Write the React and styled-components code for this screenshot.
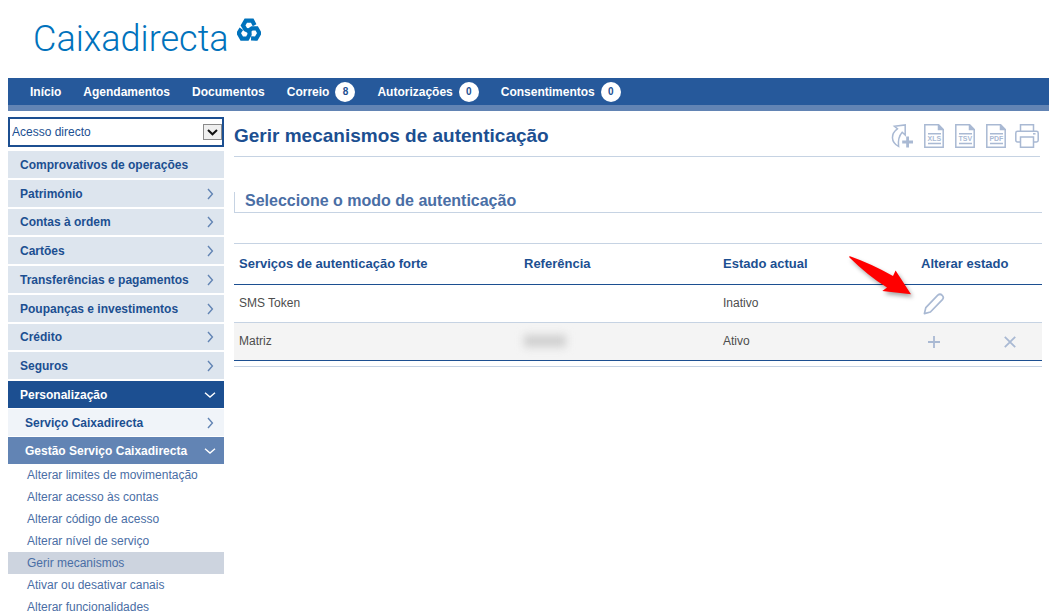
import { useState } from 'react';
import styled, { createGlobalStyle } from 'styled-components';

const topLinks = [
  { label: 'Início' },
  { label: 'Agendamentos' },
  { label: 'Documentos' },
  { label: 'Correio', count: 8 },
  { label: 'Autorizações', count: 0 },
  { label: 'Consentimentos', count: 0 },
];

const menu = [
  'Comprovativos de operações',
  'Património',
  'Contas à ordem',
  'Cartões',
  'Transferências e pagamentos',
  'Poupanças e investimentos',
  'Crédito',
  'Seguros',
];

const submenu = [
  'Alterar limites de movimentação',
  'Alterar acesso às contas',
  'Alterar código de acesso',
  'Alterar nível de serviço',
  'Gerir mecanismos',
  'Ativar ou desativar canais',
  'Alterar funcionalidades',
];

function Chevron({ down }) {
  return (
    <svg width="12" height="12" viewBox="0 0 12 12" fill="none" stroke="currentColor" strokeWidth="1.4" aria-hidden="true">
      <path d={down ? 'M1 3.8L6 8L11 3.8' : 'M4 1L8.4 6L4 11'} />
    </svg>
  );
}

// three open links turning round the centre
function Knot() {
  const link = 'M17.6 7.2L15.2 2.6H8.8L6 7.4L8.4 11.4L12.8 13.6';
  return (
    <svg width="24" height="23" viewBox="0 0 24 23" fill="none" stroke="#0072bc" strokeWidth="4.2" aria-hidden="true">
      <path d={link} />
      <path d={link} transform="rotate(120 12 12.8)" />
      <path d={link} transform="rotate(240 12 12.8)" />
    </svg>
  );
}

function ShareIcon() {
  return (
    <svg width="22" height="24" viewBox="0 0 22 24" fill="none" stroke="#a9b9d3" strokeWidth="1.5" aria-hidden="true">
      <path d="M3.4 2.2L14.2 0.9V11L11.2 8.2C8.2 11.5 6.8 16 7.6 22.4C-0.6 18 -0.2 9.6 6.4 4.8Z" />
      <path d="M16.6 12.5V23.5M11.2 18H22" strokeWidth="2.8" />
    </svg>
  );
}

function FileIcon({ type }) {
  return (
    <svg width="22" height="24" viewBox="-2 0 22 24" fill="none" stroke="#a9b9d3" strokeWidth="1.5" aria-hidden="true">
      <path d="M0.8 0.8H14.5L19.2 5.5V23.2H0.8Z" />
      <path d="M14.5 1V5.5H19Z" fill="#a9b9d3" />
      <path d="M4 9.8H17M4 19.4H17" />
      <text x="10.4" y="17.3" textAnchor="middle" fontSize="7" fontWeight="bold" fill="#a9b9d3" stroke="none">{type}</text>
    </svg>
  );
}

function PrintIcon() {
  return (
    <svg width="24" height="24" viewBox="0 0 24 24" fill="none" stroke="#a9b9d3" strokeWidth="1.5" aria-hidden="true">
      <path d="M5.5 7V0.8H18.5V7" />
      <path d="M5 18H2.5Q0.8 18 0.8 16.3V9Q0.8 7.3 2.5 7.3H21.5Q23.2 7.3 23.2 9V16.3Q23.2 18 21.5 18H19" />
      <path d="M5.5 13H18.5V23.2H5.5Z" />
      <path d="M18 9.8H20.5" />
    </svg>
  );
}

function App() {
  const [current, setCurrent] = useState('Gerir mecanismos');

  return (
    <Page>
      <GlobalStyle />
      <Header>
        <Logo href="#">
          <LogoText>Caixadirecta</LogoText>
          <Knot />
        </Logo>
      </Header>

      <TopNav>
        {topLinks.map((l) => (
          <TopLink key={l.label} href="#">
            {l.label}
            {l.count !== undefined && <Badge>{l.count}</Badge>}
          </TopLink>
        ))}
      </TopNav>

      <Body>
        <Sidebar>
          <SelectWrap>
            <Select aria-label="Acesso directo">
              <option>Acesso directo</option>
            </Select>
            <SelectArrow>
              <svg width="11" height="7" viewBox="0 0 11 7" fill="none" stroke="#111" strokeWidth="2">
                <path d="M1 1L5.5 5.3L10 1" />
              </svg>
            </SelectArrow>
          </SelectWrap>

          <MenuList>
            {menu.map((label, i) => (
              <MenuLink key={label} href="#">
                {label}
                {i > 0 && <Chevron />}
              </MenuLink>
            ))}
          </MenuList>
          <OpenList>
            <MenuLink href="#" $kind="open">Personalização<Chevron down /></MenuLink>
            <MenuLink href="#" $kind="child">Serviço Caixadirecta<Chevron /></MenuLink>
            <MenuLink href="#" $kind="openChild">Gestão Serviço Caixadirecta<Chevron down /></MenuLink>
          </OpenList>
          {submenu.map((label) => (
            <SubLink key={label} href="#" $active={label === current} onClick={() => setCurrent(label)}>
              {label}
            </SubLink>
          ))}
        </Sidebar>

        <Main>
          <TitleBar>
            <Title>Gerir mecanismos de autenticação</Title>
            <Tools>
              <IconButton aria-label="Adicionar atalho"><ShareIcon /></IconButton>
              <IconButton aria-label="Exportar XLS"><FileIcon type="XLS" /></IconButton>
              <IconButton aria-label="Exportar TSV"><FileIcon type="TSV" /></IconButton>
              <IconButton aria-label="Exportar PDF"><FileIcon type="PDF" /></IconButton>
              <IconButton aria-label="Imprimir"><PrintIcon /></IconButton>
            </Tools>
          </TitleBar>

          <Subtitle>Seleccione o modo de autenticação</Subtitle>

          <TableWrap>
            <Table>
              <colgroup>
                <col />
                <Col $w={199} />
                <Col $w={198} />
                <Col $w={126} />
              </colgroup>
              <thead>
                <tr>
                  <Th>Serviços de autenticação forte</Th>
                  <Th>Referência</Th>
                  <Th>Estado actual</Th>
                  <Th>Alterar estado</Th>
                </tr>
              </thead>
              <tbody>
                <Row>
                  <Td>SMS Token</Td>
                  <Td />
                  <Td>Inativo</Td>
                  <ActionTd>
                    <Actions>
                      <ActionButton aria-label="Editar">
                        <svg width="22" height="22" viewBox="0 0 22 22" fill="none" stroke="#a9b9d3" strokeWidth="1.7">
                          <path d="M1.4 20.6L2.8 14.6L14.8 2.2C17.8 -0.4 22 3.6 19.4 6.6L7.4 19Z" strokeLinejoin="round" />
                        </svg>
                      </ActionButton>
                      <Pointer width="70" height="48" viewBox="0 0 70 48" aria-hidden="true">
                        <path d="M5.4 4Q28 12 49 24L51.6 18.6L67 42.3L38.3 38.9L43 35.6Q24 23.6 5.4 5.4Z" fill="#f00" />
                      </Pointer>
                    </Actions>
                  </ActionTd>
                </Row>
                <Row $shaded>
                  <Td>Matriz</Td>
                  <Td><Hidden /></Td>
                  <Td>Ativo</Td>
                  <ActionTd>
                    <Actions>
                      <ActionButton aria-label="Adicionar">
                        <svg width="12" height="12" viewBox="0 0 12 12" stroke="#a9b9d3" strokeWidth="1.8">
                          <path d="M6 0V12M0 6H12" />
                        </svg>
                      </ActionButton>
                      <ActionButton aria-label="Remover">
                        <svg width="12" height="12" viewBox="0 0 12 12" stroke="#a9b9d3" strokeWidth="1.8">
                          <path d="M0.8 0.8L11.2 11.2M11.2 0.8L0.8 11.2" />
                        </svg>
                      </ActionButton>
                    </Actions>
                  </ActionTd>
                </Row>
              </tbody>
            </Table>
          </TableWrap>
        </Main>
      </Body>
    </Page>
  );
}

export default App;

const GlobalStyle = createGlobalStyle`
  * { box-sizing: border-box; }
  html { scrollbar-width: none; }
  body {
    margin: 0;
    background: #fff;
    font-family: "Liberation Sans", Arial, sans-serif;
    font-size: 12px;
    color: #4d4d4d;
  }
  a { text-decoration: none; }
  svg { display: block; flex: none; }
`;

const Page = styled.div`
  padding-left: 8px;
`;

const Header = styled.header`
  display: flex;
  height: 78px;
  padding: 18px 25px 0;
`;

const Logo = styled.a`
  display: flex;
  align-items: flex-start;
  gap: 8px;
`;

const LogoText = styled.span`
  font-family: Roboto, "Liberation Sans", sans-serif;
  font-weight: 300;
  font-size: 36px;
  line-height: 42px;
  color: #0072bc;
`;

const TopNav = styled.nav`
  display: flex;
  align-items: center;
  gap: 22px;
  height: 33px;
  padding-left: 22px;
  background: #26599b;
  border-bottom: 6px solid #6284b4;
`;

const TopLink = styled.a`
  display: flex;
  align-items: center;
  gap: 6px;
  font-weight: bold;
  color: #fff;
`;

const Badge = styled.span`
  width: 20px;
  height: 20px;
  border-radius: 50%;
  background: #fff;
  color: #1c4f91;
  font-size: 10px;
  line-height: 20px;
  text-align: center;
`;

const Body = styled.div`
  display: flex;
  gap: 10px;
  padding-right: 7px;
`;

const Sidebar = styled.aside`
  flex: none;
  width: 216px;
  padding-top: 6px;
`;

const SelectWrap = styled.div`
  display: grid;
  align-items: center;
  height: 30px;
  margin-bottom: 4px;
  border: 2px solid #1c4f91;
`;

const Select = styled.select`
  grid-area: 1 / 1;
  width: 100%;
  height: 26px;
  padding: 0 2px;
  border: 0;
  background: #fff;
  appearance: none;
  font: inherit;
  color: #1c4f91;
`;

const SelectArrow = styled.span`
  grid-area: 1 / 1;
  justify-self: end;
  display: flex;
  align-items: center;
  justify-content: center;
  width: 19px;
  height: 16px;
  border: 1px solid #8a8a8a;
  background: #efefef;
  pointer-events: none;
`;

const MenuList = styled.nav`
  display: grid;
  grid-auto-rows: 27px 27px 26px 27px;
  gap: 2px;
  margin-bottom: 2px;
`;

const OpenList = styled.nav`
  display: grid;
  grid-auto-rows: 27px;
  gap: 1px;
`;

const kinds = {
  top: { bg: '#dde5ee', fg: '#1c4f91', icon: '#6284b4', pad: 12 },
  open: { bg: '#1c4f91', fg: '#fff', icon: '#fff', pad: 12 },
  child: { bg: '#f0f4f9', fg: '#1c4f91', icon: '#6284b4', pad: 17 },
  openChild: { bg: '#6284b4', fg: '#fff', icon: '#fff', pad: 17 },
};

const MenuLink = styled.a`
  display: flex;
  align-items: center;
  justify-content: space-between;
  padding: 0 8px 0 ${(p) => kinds[p.$kind || 'top'].pad}px;
  background: ${(p) => kinds[p.$kind || 'top'].bg};
  color: ${(p) => kinds[p.$kind || 'top'].fg};
  font-weight: bold;
  svg {
    color: ${(p) => kinds[p.$kind || 'top'].icon};
  }
`;

const SubLink = styled.a`
  display: block;
  padding-left: 19px;
  line-height: 22px;
  color: #4a6ea5;
  background: ${(p) => (p.$active ? '#cdd4df' : 'transparent')};
`;

const Main = styled.main`
  flex: 1;
  min-width: 0;
`;

const TitleBar = styled.div`
  display: flex;
  align-items: center;
  justify-content: space-between;
  height: 46px;
  margin-right: 2px;
  padding: 5px 1px 0 0;
  border-bottom: 1px solid #c6d3e3;
`;

const Title = styled.h1`
  margin: 0;
  font-size: 19px;
  color: #1c4f91;
`;

const Tools = styled.div`
  display: flex;
  gap: 9px;
`;

const IconButton = styled.button`
  padding: 0;
  border: 0;
  background: none;
  cursor: pointer;
`;

const Subtitle = styled.h2`
  margin: 35px 0 30px;
  padding: 0 0 2px 10px;
  border-left: 1px solid #c6d3e3;
  border-bottom: 1px solid #c6d3e3;
  font-size: 16px;
  line-height: 18px;
  color: #4a6ea5;
`;

const TableWrap = styled.div`
  padding-bottom: 5px;
  border-top: 1px solid #c6d3e3;
  border-bottom: 1px solid #c6d3e3;
`;

const Table = styled.table`
  width: 100%;
  table-layout: fixed;
  border-spacing: 0;
  border-bottom: 1px solid #1c4f91;
`;

const Col = styled.col`
  width: ${(p) => p.$w}px;
`;

const Th = styled.th`
  height: 41px;
  padding: 0 5px 1px;
  border-bottom: 1px solid #1c4f91;
  font-size: 13px;
  text-align: left;
  color: #1c4f91;
`;

const Row = styled.tr`
  height: ${(p) => (p.$shaded ? 37 : 38)}px;
  background: ${(p) => (p.$shaded ? '#f4f4f4' : '#fff')};
  td {
    border-bottom: ${(p) => (p.$shaded ? '0' : '1px solid #c6d3e3')};
  }
`;

const Td = styled.td`
  padding: 0 5px 2px;
`;

const ActionTd = styled.td`
  padding: 0;
`;

const Actions = styled.div`
  position: relative;
  display: flex;
  gap: 40px;
`;

const ActionButton = styled.button`
  display: flex;
  align-items: center;
  justify-content: center;
  width: 36px;
  height: 24px;
  padding: 0;
  border: 0;
  background: none;
  cursor: pointer;
`;

const Pointer = styled.svg`
  position: absolute;
  right: calc(100% + 2px);
  bottom: 16px;
  pointer-events: none;
  filter: drop-shadow(2px 3px 2px rgba(0, 0, 0, 0.35));
`;

const Hidden = styled.span`
  display: block;
  width: 42px;
  height: 12px;
  background: #cfcfcf;
  filter: blur(4px);
`;
